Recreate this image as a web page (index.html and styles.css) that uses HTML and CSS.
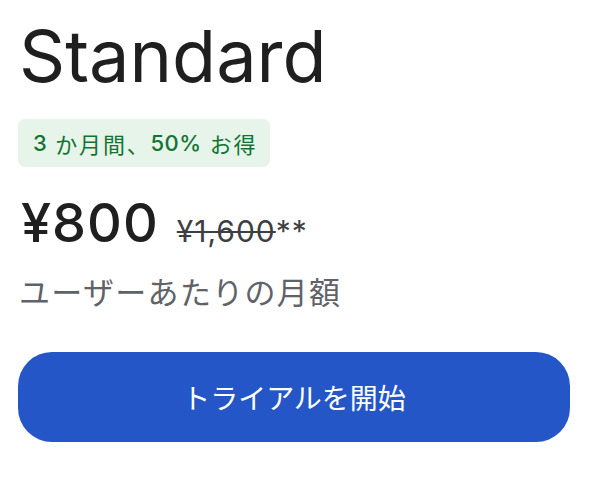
FILE: index.html
```html
<!DOCTYPE html>
<html lang="ja">
<head>
<meta charset="utf-8">
<link rel="stylesheet" href="styles.css">
</head>
<body>
<div class="card">
  <h1 class="title">Standard</h1>
  <div class="badge"><span class="num">3</span> か月間、<span class="num">50%</span> お得</div>
  <div class="price">
    <span class="now">¥800</span>
    <span class="was"><s>¥1,600</s>**</span>
  </div>
  <div class="per">ユーザーあたりの月額</div>
  <button class="cta">トライアルを開始</button>
</div>
</body>
</html>
```
FILE: styles.css
```css
html, body {
  margin: 0;
  padding: 0;
  background: #ffffff;
}
body {
  font-family: "Inter", "Noto Sans CJK JP", sans-serif;
  color: #202124;
}
.card {
  display: flex;
  flex-direction: column;
  align-items: flex-start;
  padding: 12px 30px 0 18px;
}
.title {
  margin: 0 0 0 1px;
  font-size: 72px;
  font-weight: 400;
  line-height: 88px;
  letter-spacing: 0;
  color: #1f1f1f;
}
.badge {
  margin-top: 19px;
  height: 48px;
  width: 252px;
  box-sizing: border-box;
  display: flex;
  align-items: center;
  padding-left: 15px;
  background: #e6f4ea;
  border-radius: 7px;
  color: #137333;
  font-size: 22px;
  letter-spacing: 1.8px;
  white-space: pre;
}
.num {
  font-weight: 500;
  letter-spacing: 0.5px;
}
.price {
  margin-top: 28px;
  margin-left: 3px;
  display: flex;
  align-items: baseline;
  gap: 18px;
  height: 56px;
}
.now {
  font-size: 54px;
  font-weight: 500;
  letter-spacing: 1px;
  color: #1f1f1f;
  line-height: 56px;
}
.was {
  font-size: 30px;
  letter-spacing: 1px;
  color: #3c4043;
}
.was s {
  text-decoration-thickness: 2px;
}
.per {
  margin-top: 22px;
  margin-left: 1px;
  font-size: 31px;
  letter-spacing: 1.3px;
  color: #5f6368;
  line-height: 40px;
}
.cta {
  margin-top: 39px;
  width: 552px;
  height: 90px;
  border: none;
  border-radius: 34px;
  background: #2456c8;
  color: #ffffff;
  font-family: "Inter", "Noto Sans CJK JP", sans-serif;
  font-size: 28px;
  font-weight: 400;
}
```
